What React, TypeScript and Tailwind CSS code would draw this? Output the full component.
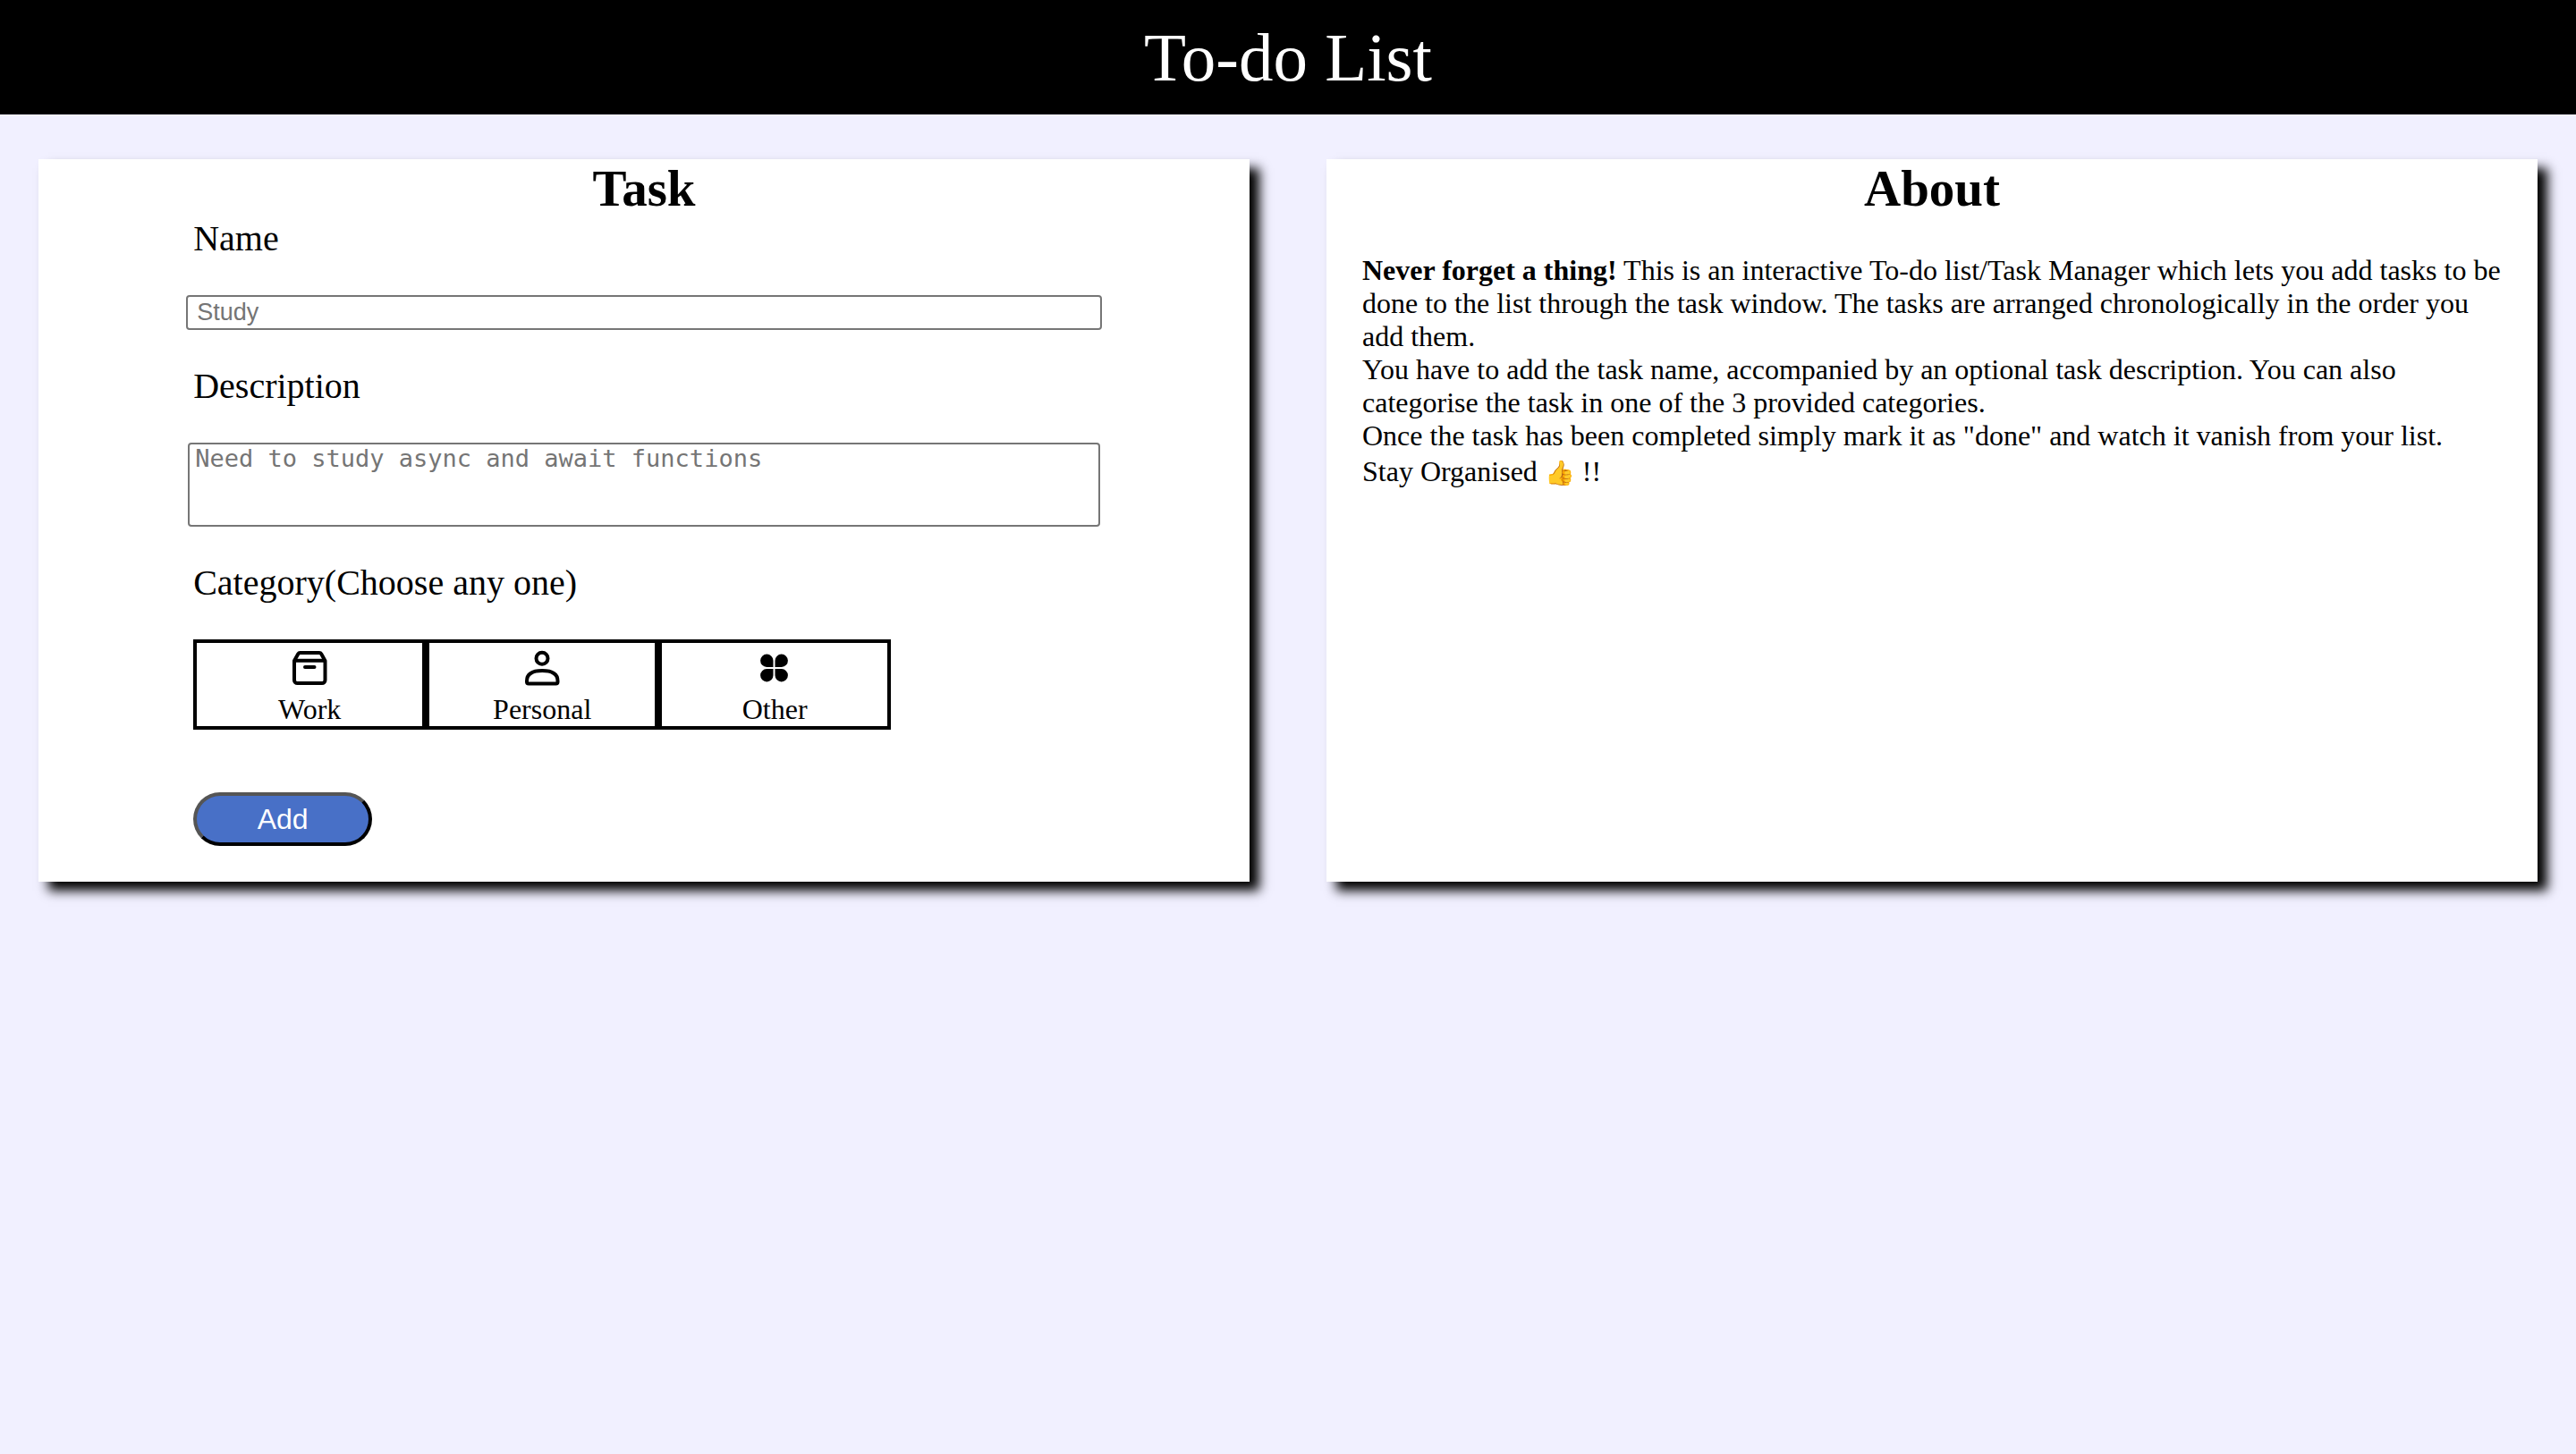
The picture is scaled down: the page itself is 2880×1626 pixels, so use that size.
import React from "react";

const petal = "M22.5 23H15.200a7.200 7.200 0 1 1 7.300-7.300z";

const categories = [
  {
    id: "work",
    label: "Work",
    icon: (
      <svg viewBox="0 0 48 48" className="h-12 w-12" fill="none" stroke="currentColor" strokeWidth="4" strokeLinecap="round" strokeLinejoin="round" aria-hidden="true">
        <path d="M7 16l4.300-7.800Q12 7 13.500 7h21.500q1.500 0 2.200 1.200L41.500 16v21.500a3.500 3.500 0 0 1-3.500 3.500H10.500a3.500 3.500 0 0 1-3.500-3.500z" />
        <path d="M8 15.800h32.500M19 23h10.500" />
      </svg>
    ),
  },
  {
    id: "personal",
    label: "Personal",
    icon: (
      <svg viewBox="0 0 48 48" className="h-12 w-12" fill="none" stroke="currentColor" strokeWidth="4" strokeLinejoin="round" aria-hidden="true">
        <circle cx="24" cy="13.200" r="6.500" />
        <path d="M7 38.500C7 31 13 27 24.200 27S41.500 31 41.500 38.500V39.500a2 2 0 0 1-2 2H9a2 2 0 0 1-2-2z" />
      </svg>
    ),
  },
  {
    id: "other",
    label: "Other",
    icon: (
      <svg viewBox="0 0 48 48" className="h-12 w-12" fill="currentColor" aria-hidden="true">
        <path d={petal} />
        <path d={petal} transform="rotate(90 23.500 24)" />
        <path d={petal} transform="rotate(180 23.500 24)" />
        <path d={petal} transform="rotate(270 23.500 24)" />
      </svg>
    ),
  },
];

const labelClass = "ml-2 block text-[40px] leading-[46px]";

function Card({ title, children }: { title: string; children: React.ReactNode }) {
  return (
    <section className="bg-white shadow-[11px_10px_12px_#000]">
      <h2 className="text-center text-[57px] leading-[66px] font-bold">{title}</h2>
      {children}
    </section>
  );
}

export default function App() {
  return (
    <div className="min-h-screen bg-[#f1f0ff] font-['Liberation_Serif',serif] text-black">
      <header className="bg-black text-white">
        <h1 className="text-center text-[77px] leading-[128px]">To-do List</h1>
      </header>
      <main className="grid grid-cols-2 gap-[86px] px-[43px] pt-[50px]">
        <Card title="Task">
          <form className="px-[12.2%] pb-10" onSubmit={(e) => e.preventDefault()}>
            <label htmlFor="name" className={labelClass}>Name</label>
            <input
              id="name"
              type="text"
              placeholder="Study"
              className="my-10 block h-[39px] w-full rounded-sm border-2 border-[#767676] px-2.5 font-['Liberation_Sans',sans-serif] text-[27px] leading-[31px] placeholder:text-[#757575]"
            />
            <label htmlFor="description" className={labelClass}>Description</label>
            <div className="my-10 px-0.5">
              <textarea
                id="description"
                placeholder="Need to study async and await functions"
                className="block h-[94px] w-full resize-none rounded-sm border-2 border-[#767676] px-1.5 font-['DejaVu_Sans_Mono',monospace] text-[27px] leading-[32px] placeholder:text-[#757575]"
              />
            </div>
            <p className={labelClass}>Category(Choose any one)</p>
            <div className="mt-10 ml-2 flex">
              {categories.map((c) => (
                <button
                  key={c.id}
                  type="button"
                  className="flex h-[101px] w-[260px] flex-col items-center gap-1 border-4 border-black pt-1 text-[32px] leading-[37px]"
                >
                  {c.icon}
                  {c.label}
                </button>
              ))}
            </div>
            <button
              type="submit"
              className="mt-[70px] ml-2 block h-[60px] w-[200px] rounded-full border-4 border-t-[#555] border-r-black border-b-black border-l-[#555] bg-[#4870c7] text-center font-['Liberation_Sans',sans-serif] text-[32px] leading-[52px] text-white"
            >
              Add
            </button>
          </form>
        </Card>
        <Card title="About">
          <p className="px-10 pt-10 text-[32px] leading-[37px]">
            <b>Never forget a thing!</b> This is an interactive To-do list/Task Manager which lets you add tasks to be
            done to the list through the task window. The tasks are arranged chronologically in the order you add them.
            <br />
            You have to add the task name, accompanied by an optional task description. You can also categorise the
            task in one of the 3 provided categories.
            <br />
            Once the task has been completed simply mark it as "done" and watch it vanish from your list.
          </p>
          <p className="px-10 text-[32px] leading-[43px]">
            Stay Organised <span className="text-[27px]">👍</span> !!
          </p>
        </Card>
      </main>
    </div>
  );
}
